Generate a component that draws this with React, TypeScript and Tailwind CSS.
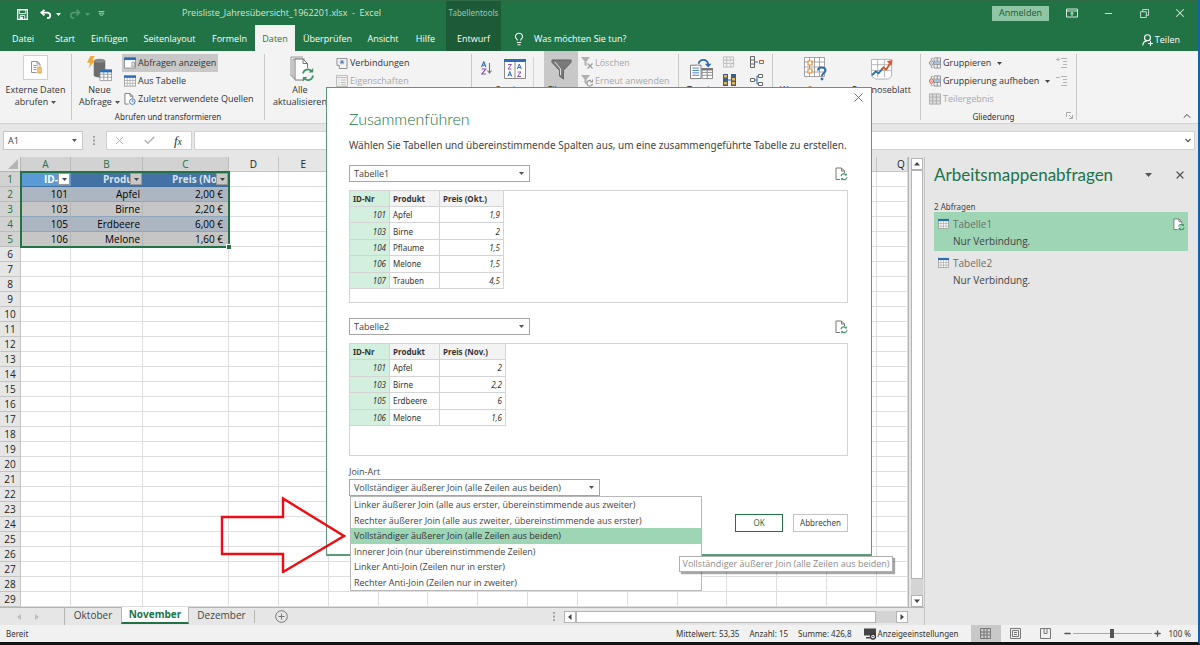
import React from 'react';
import { ChevronUp, Lightbulb, X, Check, Minus, Plus } from 'lucide-react';

const TABS = [
  { label: 'Datei', width: 'w-[46px]' },
  { label: 'Start', width: 'w-[38px]' },
  { label: 'Einfügen', width: 'w-[51px]' },
  { label: 'Seitenlayout', width: 'w-[69px]' },
  { label: 'Formeln', width: 'w-[51px]' },
  { label: 'Daten', width: 'w-[40px]', active: true },
  { label: 'Überprüfen', width: 'w-[65px]' },
  { label: 'Ansicht', width: 'w-[46px]' },
  { label: 'Hilfe', width: 'w-[39px]' },
];

const COLUMNS = 'ABCDEFGHIJKLMNOPQ'.split('');
const ROWS = Array.from({ length: 29 }, (_, i) => i + 1);

const SHEET_HEAD = ['ID-Nr', 'Produkt', 'Preis (Nov.)'];
const SHEET_DATA = [
  ['101', 'Apfel', '2,00 €'],
  ['103', 'Birne', '2,20 €'],
  ['105', 'Erdbeere', '6,00 €'],
  ['106', 'Melone', '1,60 €'],
];

const PREVIEW_1 = [
  ['101', 'Apfel', '1,9'],
  ['103', 'Birne', '2'],
  ['104', 'Pflaume', '1,5'],
  ['106', 'Melone', '1,5'],
  ['107', 'Trauben', '4,5'],
];
const PREVIEW_2 = [
  ['101', 'Apfel', '2'],
  ['103', 'Birne', '2,2'],
  ['105', 'Erdbeere', '6'],
  ['106', 'Melone', '1,6'],
];

const JOINS = [
  'Linker äußerer Join (alle aus erster, übereinstimmende aus zweiter)',
  'Rechter äußerer Join (alle aus zweiter, übereinstimmende aus erster)',
  'Vollständiger äußerer Join (alle Zeilen aus beiden)',
  'Innerer Join (nur übereinstimmende Zeilen)',
  'Linker Anti-Join (Zeilen nur in erster)',
  'Rechter Anti-Join (Zeilen nur in zweiter)',
];

type IconProps = { className?: string };

function Caret({ className = 'text-[#555]' }: IconProps) {
  return (
    <svg viewBox="0 0 5 3" className={`h-[3px] w-[5px] shrink-0 ${className}`} aria-hidden="true">
      <path d="M0 0h5L2.5 3z" fill="currentColor" />
    </svg>
  );
}

function TableIcon({ className = 'h-[13px] w-[13px]' }: IconProps) {
  return (
    <svg viewBox="0 0 13 13" className={`shrink-0 ${className}`} aria-hidden="true">
      <rect x="0.5" y="1" width="12" height="11" fill="#fff" stroke="#8a8a8a" strokeWidth="0.8" />
      <path d="M0.5 6h12M0.5 9h12M3.5 3v9M6.5 3v9M9.5 3v9" stroke="#9a9a9a" strokeWidth="0.7" />
      <rect x="0" y="0.5" width="13" height="2.6" fill="#2e6db4" />
    </svg>
  );
}

function PageRefresh({ className = 'h-[14px] w-[13px]' }: IconProps) {
  return (
    <svg viewBox="0 0 13 14" className={`shrink-0 ${className}`} fill="none" aria-hidden="true">
      <path d="M5 12.5H1V1h5.5L9.5 4v2" stroke="#777" fill="#fff" />
      <path d="M6.5 1v3h3" stroke="#777" />
      <path d="M6 9.2a2.8 2.8 0 0 1 5-1.2M12 10.2a2.8 2.8 0 0 1-5 1.4" stroke="#3f9468" strokeWidth="1.2" />
      <path d="M11.8 6.2v2.4H9.4zM6.2 13.6v-2.6h2.4z" fill="#3f9468" />
    </svg>
  );
}

function Divider() {
  return <div className="mt-[3px] h-[66px] w-px shrink-0 bg-[#c8c8c8]" />;
}

function RibbonRow({ icon, label, disabled, caret, active }: {
  icon: React.ReactNode; label: string; disabled?: boolean; caret?: boolean; active?: boolean;
}) {
  return (
    <button
      type="button"
      disabled={disabled}
      className={`flex h-[18px] items-center gap-[2px] whitespace-nowrap px-[2px] ${active ? 'bg-[#c8c8c8]' : ''} ${disabled ? 'text-[#a8a8a8]' : 'text-[#333]'}`}
    >
      {icon}
      {label}
      {caret && <Caret className="ml-1 text-[#444]" />}
    </button>
  );
}

function BigButton({ icon, lines, caret, className = '' }: {
  icon: React.ReactNode; lines: string[]; caret?: boolean; className?: string;
}) {
  return (
    <button type="button" className={`flex flex-col items-center whitespace-nowrap pt-[3px] leading-[12px] ${className}`}>
      <span className="flex h-[30px] items-center">{icon}</span>
      {lines.map((line, i) => (
        <span key={line} className="flex items-center gap-[3px]">
          {line}
          {caret && i === lines.length - 1 && <Caret />}
        </span>
      ))}
    </button>
  );
}

function GroupIcon({ accent }: { accent: string }) {
  return (
    <svg viewBox="0 0 13 13" className="h-[12px] w-[12px] shrink-0" fill="none" aria-hidden="true">
      <path d="M5.5 1h7v11h-7zM5.5 4.5h7M5.5 8h7M9 1v11" stroke="#777" strokeWidth="0.8" />
      <path d="M4 1.5H2.5v10H4" stroke="#888" strokeWidth="0.8" />
      <rect x="6" y="5" width="6" height="2.5" fill="#9cc3e6" />
      <circle cx="2.8" cy="6.5" r="2.3" fill="#fff" stroke={accent} />
      <path d="M1.5 6.5h2.6" stroke={accent} />
    </svg>
  );
}

function TitleBar() {
  return (
    <div className="flex h-[25px] items-stretch border-t border-[#2e6a45] text-[9px] text-[#cfe6d8]">
      <div className="flex w-[182px] items-center pl-[17px] pt-[2px]">
        <button type="button" aria-label="Speichern" className="mr-[12px]">
          <svg viewBox="0 0 12 12" className="h-[11px] w-[11px]" aria-hidden="true">
            <path d="M0.7 0.7h10.6v10.6H0.7z" fill="none" stroke="#fff" strokeWidth="1.4" />
            <path d="M2.5 1h7v4h-7zM3.5 7h5v4.5h-5z" fill="none" stroke="#fff" strokeWidth="1" />
            <path d="M3.5 8.5h3v3h-3z" fill="#fff" />
          </svg>
        </button>
        <button type="button" aria-label="Rückgängig" className="flex items-center gap-[4px]">
          <svg viewBox="0 0 12 10" className="h-[10px] w-[12px]" fill="none" stroke="#fff" strokeWidth="1.7" aria-hidden="true">
            <path d="M4.5 0.8L1.3 3.6l3.2 2.8M1.5 3.6h5.5a3 2.6 0 0 1 0 5.6" />
          </svg>
          <Caret className="text-white" />
        </button>
        <button type="button" aria-label="Wiederholen" disabled className="ml-[8px] flex items-center gap-[4px]">
          <svg viewBox="0 0 12 10" className="h-[10px] w-[12px]" fill="none" stroke="#559a72" strokeWidth="1.5" aria-hidden="true">
            <path d="M7.5 0.8l3.2 2.8-3.2 2.8M10.5 3.6H5a3 2.6 0 0 0 0 5.6" />
          </svg>
          <Caret className="text-[#559a72]" />
        </button>
        <button type="button" aria-label="Symbolleiste anpassen" className="ml-[8px]">
          <svg viewBox="0 0 7 6" className="h-[6px] w-[7px]" fill="none" stroke="#a8d0b8" strokeWidth="0.9" aria-hidden="true">
            <path d="M0.5 0.5h6M1 2.2h5L3.500 5z" />
          </svg>
        </button>
      </div>
      <h1 className="flex w-[264px] items-center whitespace-pre">Preisliste_Jahresübersicht_1962201.xlsx  -  Excel</h1>
      <div className="flex w-[55px] items-center justify-center bg-[#1c5a38] font-['Noto_Sans',sans-serif] text-[8px] text-[#9cc8ae]">Tabellentools</div>
      <div className="ml-auto flex items-center text-[#d5eadd]">
        <button type="button" className="h-[15px] w-[57px] bg-[#8fc6a5] text-[#1c5a38]">Anmelden</button>
        <button type="button" aria-label="Menüband-Anzeigeoptionen" className="ml-[17px]">
          <svg viewBox="0 0 12 10" className="h-[10px] w-[12px]" fill="none" stroke="currentColor" aria-hidden="true">
            <path d="M0.5 1h11v8H0.5zM0.5 3h11M6 8V4.5M4.3 6L6 4.4 7.7 6" />
          </svg>
        </button>
        <button type="button" aria-label="Minimieren" className="ml-[25px]"><Minus size={11} strokeWidth={2} /></button>
        <button type="button" aria-label="Wiederherstellen" className="ml-[26px]">
          <svg viewBox="0 0 10 10" className="h-[9px] w-[9px]" fill="none" stroke="currentColor" aria-hidden="true">
            <path d="M0.5 3h6.5v6.5H0.5zM3 3V0.5h6.5V7H7" />
          </svg>
        </button>
        <button type="button" aria-label="Schließen" className="ml-[24px] mr-[11px]"><X size={14} strokeWidth={1.8} /></button>
      </div>
    </div>
  );
}

function TabBar() {
  return (
    <nav className="flex h-[26px] items-stretch text-[9px] font-medium text-white">
      {TABS.map((t) => (
        <button key={t.label} type="button" className={`shrink-0 pt-[2px] ${t.width} ${t.active ? 'bg-[#f3f3f3] text-[#217346]' : ''}`}>
          {t.label}
        </button>
      ))}
      <button type="button" className="ml-px w-[55px] bg-[#1c5a38] pt-[2px]">Entwurf</button>
      <button type="button" className="ml-[11px] flex items-center gap-[8px] pt-[2px]">
        <Lightbulb size={14} strokeWidth={1.8} />
        Was möchten Sie tun?
      </button>
      <button type="button" className="ml-auto mr-[18px] flex items-center gap-[2px] pt-[4px]">
        <svg viewBox="0 0 11 12" className="h-[12px] w-[11px]" fill="none" stroke="#fff" strokeWidth="1.1" aria-hidden="true">
          <circle cx="5.5" cy="3.8" r="3" />
          <path d="M0.8 11.5c0-2.5 1.5-4.2 4-4.6M6 9.5h5M8.5 7v5" />
        </svg>
        Teilen
      </button>
    </nav>
  );
}

function Ribbon() {
  return (
    <section aria-label="Menüband" className="flex h-[73px] items-start border-b border-[#d2d2d2] bg-[#f3f3f3] text-[9px] text-[#333]">
      <BigButton
        className="w-[71px]"
        lines={['Externe Daten', 'abrufen']}
        caret
        icon={
          <svg viewBox="0 0 25 25" className="mb-[4px] h-[25px] w-[25px]" fill="none" aria-hidden="true">
            <path d="M0.5 0.5h24v24H0.5z" fill="#fff" stroke="#cfcfcf" />
            <path d="M8.5 6.5h6l2.5 2.5v2M8.5 6.5v11h5M14 6.5V9h3M10.500 10.500h4M10.500 12.500h3M10.500 14.500h3" stroke="#888" strokeWidth="0.9" />
            <rect x="14" y="11.500" width="5" height="7" rx="1.500" fill="#f0ab55" />
            <path d="M14 14h5M14 16h5" stroke="#fbe0bd" strokeWidth="0.700" />
          </svg>
        }
      />
      <Divider />
      <div className="flex w-[192px] flex-col">
        <div className="flex">
          <BigButton
            className="ml-[5px] w-[45px]"
            lines={['Neue', 'Abfrage']}
            caret
            icon={
              <svg viewBox="0 0 26 28" className="h-[27px] w-[25px]" aria-hidden="true">
                <path d="M7 5v15c0 3 12 3 12 0V5z" fill="#6d6d6d" />
                <ellipse cx="13" cy="5" rx="6" ry="2.200" fill="#8a8a8a" />
                <path d="M3.500 0H8L5.500 4.500h3L1.500 13l2-6H0z" fill="#f0a73c" />
                <path d="M13.500 14.500h12v11h-12zM13.500 19h12M13.500 22h12M17.500 15v10M21.500 15v10" fill="#fff" stroke="#8a8a8a" strokeWidth="0.800" />
                <path d="M13 14h13v3H13z" fill="#2e6db4" />
              </svg>
            }
          />
          <div className="flex flex-col items-start pt-[3px]">
            <RibbonRow active icon={
              <svg viewBox="0 0 13 13" className="h-[12px] w-[12px] shrink-0" aria-hidden="true">
                <path d="M0.500 1h12v11H0.500z" fill="#fff" stroke="#8a8a8a" />
                <path d="M0 0.500h13v2.800H0z" fill="#2e6db4" />
                <path d="M8.500 5.500h3v5h-3z" fill="#ddd" stroke="#888" strokeWidth="0.700" />
              </svg>
            } label="Abfragen anzeigen" />
            <RibbonRow icon={<TableIcon className="h-[12px] w-[12px]" />} label="Aus Tabelle" />
            <RibbonRow icon={
              <svg viewBox="0 0 13 13" className="h-[12px] w-[12px] shrink-0" fill="none" aria-hidden="true">
                <path d="M5 12H1V0.500h5.500l3 3V6M6.500 0.500v3h3" stroke="#777" fill="#fff" />
                <circle cx="9" cy="9.300" r="3" stroke="#2e6db4" fill="#fff" />
                <path d="M9 7.500v2h1.500" stroke="#2e6db4" strokeWidth="0.800" />
              </svg>
            } label="Zuletzt verwendete Quellen" />
          </div>
        </div>
        <div className="h-[14px] text-center font-['Noto_Sans',sans-serif] text-[8px] leading-[18px]">Abrufen und transformieren</div>
      </div>
      <Divider />
      <BigButton
        className="ml-[2px] w-[66px]"
        lines={['Alle', 'aktualisieren']}
        icon={
          <svg viewBox="0 0 24 26" className="ml-[4px] h-[26px] w-[24px]" fill="none" aria-hidden="true">
            <path d="M3 20H1V1h12M5 22H3V3h12" stroke="#999" />
            <path d="M14 24H5V3h8l4.500 4.500V12M13 3v4.500h4.500" stroke="#777" fill="#fff" />
            <path d="M13 17.500a5 5 0 0 1 9-2M23 19.500a5 5 0 0 1-9 2.500" stroke="#3f9468" strokeWidth="1.800" />
            <path d="M23.200 12v4.500h-4.500zM12.800 25.500V21h4.500z" fill="#3f9468" />
          </svg>
        }
      />
      <div className="flex w-[138px] flex-col items-start pl-px pt-[3px]">
        <RibbonRow icon={
          <svg viewBox="0 0 12 12" className="h-[11px] w-[12px] shrink-0" fill="none" aria-hidden="true">
            <path d="M0.500 8V0.500h11V8M3 11.500h8.500V7.500M0.500 8H3v3.500" stroke="#888" />
            <path d="M6 2v5M3.500 4.500h5M4.300 2.800l3.400 3.400M7.700 2.800L4.300 6.200" stroke="#2e6db4" strokeWidth="0.800" />
          </svg>
        } label="Verbindungen" />
        <RibbonRow disabled icon={
          <svg viewBox="0 0 12 12" className="h-[12px] w-[12px] shrink-0" fill="none" stroke="#b0b0b0" aria-hidden="true">
            <path d="M0.500 0.500h11v11H0.500zM0.500 2.500h11M2.500 5h1M5 5h5M2.500 7.500h1M5 7.500h5M2.500 9.800h1M5 9.800h5" strokeWidth="0.800" />
          </svg>
        } label="Eigenschaften" />
      </div>
      <Divider />
      <div className="flex w-[206px] items-start">
        <button type="button" aria-label="Von A bis Z sortieren" className="ml-[9px] mt-[10px]">
          <svg viewBox="0 0 11 14" className="h-[14px] w-[11px]" fill="none" strokeWidth="1.100" aria-hidden="true">
            <path d="M0.500 6L2.800 0.800 5 6M1.300 4.200h3" stroke="#2e6db4" />
            <path d="M0.800 8h4L0.800 13h4.200" stroke="#8a4fb0" />
            <path d="M8.500 2v10M6.500 9.500l2 2.500 2-2.500" stroke="#777" />
          </svg>
        </button>
        <BigButton
          className="ml-[5px] w-[36px]"
          lines={['Sortieren']}
          icon={
            <svg viewBox="0 0 22 20" className="h-[20px] w-[22px]" fill="none" aria-hidden="true">
              <path d="M0.500 1h21v18.500H0.500zM11 1v18" stroke="#888" fill="#fff" />
              <path d="M0 0h22v3H0z" fill="#2e6db4" />
              <path d="M4 5.500h3.500L4 10h3.500M13.500 13h3.500l-3.500 4.500H17" stroke="#8a4fb0" />
              <path d="M3.800 17.500L5.800 12.500l2 5M4.500 16h2.600M13.300 10l2-5 2 5M14 8.500h2.600" stroke="#2e6db4" />
            </svg>
          }
        />
        <div className="mt-[6px] h-[46px] w-px bg-[#d4d4d4]" />
        <BigButton
          className="ml-[10px] h-[62px] w-[34px] bg-[#c8c8c8]"
          lines={['Filtern']}
          icon={
            <svg viewBox="0 0 22 22" className="h-[21px] w-[21px]" aria-hidden="true">
              <path d="M1 1h20v2.500L13 12v9l-4-3v-6L1 3.500z" fill="#7a7a7a" stroke="#5f5f5f" />
              <path d="M4 3l6 7.500V17" fill="none" stroke="#e6e6e6" />
            </svg>
          }
        />
        <div className="flex flex-col items-start pl-px pt-[3px]">
          <RibbonRow disabled icon={
            <svg viewBox="0 0 12 12" className="h-[12px] w-[12px] shrink-0" aria-hidden="true">
              <path d="M0 0h9L5.500 4.500v5L3.500 8V4.500z" fill="#b0b0b0" />
              <path d="M6.500 6.500l5 5M11.500 6.500l-5 5" stroke="#999" strokeWidth="1.200" />
            </svg>
          } label="Löschen" />
          <RibbonRow disabled icon={
            <svg viewBox="0 0 12 12" className="h-[12px] w-[12px] shrink-0" fill="none" aria-hidden="true">
              <path d="M0 0h9L5.500 4.500v5L3.500 8V4.500z" fill="#b0b0b0" />
              <path d="M11 6.500A2.800 2.800 0 1 0 11.500 9M11.500 4.500v2.500H9" stroke="#999" strokeWidth="1.200" />
            </svg>
          } label="Erneut anwenden" />
        </div>
      </div>
      <Divider />
      <div className="flex w-[93px] items-start">
        <BigButton
          className="ml-[2px] w-[40px]"
          lines={['Text in']}
          icon={
            <svg viewBox="0 0 24 24" className="h-[23px] w-[23px]" fill="none" aria-hidden="true">
              <path d="M0.500 7.500h11v14H0.500z" fill="#fff" stroke="#777" />
              <path d="M2.500 10.500h7M2.500 13h7M2.500 15.500h7M2.500 18h7" stroke="#2e6db4" strokeWidth="0.900" />
              <path d="M12.500 11.500h11v10h-11zM12.500 15h11M12.500 18h11M18 11.500v10" stroke="#888" fill="#fff" />
              <path d="M12 10.500h12V13H12z" fill="#777" />
              <path d="M9 6c1-5 9-6 10 1" stroke="#2e6db4" strokeWidth="1.800" />
              <path d="M15.500 6h7L19 10z" fill="#2e6db4" />
            </svg>
          }
        />
        <div className="grid grid-cols-[27px_14px] gap-y-[6px] pl-[2px] pt-[5px]">
          <button type="button" aria-label="Blitzvorschau" disabled>
            <svg viewBox="0 0 13 12" className="h-[12px] w-[12px]" fill="none" stroke="#bbb" aria-hidden="true">
              <path d="M0.500 0.500h11v11H0.500zM0.500 4h11M0.500 7.500h11M4 0.500v11M8 0.500v5M8 11.500l1-4h3" />
            </svg>
          </button>
          <button type="button" aria-label="Konsolidieren">
            <svg viewBox="0 0 14 12" className="h-[12px] w-[14px]" fill="none" aria-hidden="true">
              <path d="M0.500 0.500h4v11h-4zM0.500 4h4M0.500 8h4" stroke="#666" />
              <path d="M5 6h3" stroke="#2e6db4" />
              <path d="M9.500 4.500h4v3h-4z" stroke="#d65532" />
            </svg>
          </button>
          <button type="button" aria-label="Duplikate entfernen">
            <svg viewBox="0 0 13 12" className="h-[12px] w-[13px]" aria-hidden="true">
              <path d="M0 0h5v12H0zM8 0h5v12H8z" fill="#3b5f8c" />
              <path d="M1 1h3v2.500H1zM1 8h3v2.500H1zM9 4h3v2.500H9zM9 8h3v2.500H9z" fill="#f0b24c" />
              <path d="M5 6h3" stroke="#2e6db4" />
            </svg>
          </button>
          <button type="button" aria-label="Beziehungen">
            <svg viewBox="0 0 13 12" className="h-[12px] w-[13px]" fill="none" aria-hidden="true">
              <path d="M0.500 4.500h4v3h-4zM8.500 0.500h4v3h-4zM8.500 8.500h4v3h-4z" stroke="#666" fill="#fff" />
              <path d="M4.500 6h2.500M8.500 2H7v8h1.500" stroke="#2e6db4" />
            </svg>
          </button>
        </div>
      </div>
      <Divider />
      <div className="flex w-[147px] items-start">
        <BigButton
          className="ml-[7px] w-[70px]"
          lines={['Was-wäre-wenn-']}
          icon={
            <svg viewBox="0 0 23 24" className="h-[24px] w-[23px]" fill="none" aria-hidden="true">
              <path d="M0.500 0.500h20v19h-20zM0.500 5h20M0.500 10h20M0.500 15h20M5.500 0.500v19M10.500 0.500v19M15.500 0.500v19" stroke="#999" strokeWidth="0.900" fill="#fff" />
              <path d="M4 4h4v4H4zM4 12h4v4H4z" stroke="#e08a3c" fill="#fff" strokeWidth="1.200" />
              <path d="M14 13.500c0-4 7.500-4 7.500 0 0 2.500-3.500 2.500-3.500 5.500" stroke="#2e6db4" strokeWidth="2" />
              <circle cx="18" cy="22" r="1.400" fill="#2e6db4" />
            </svg>
          }
        />
        <BigButton
          className="w-[63px]"
          lines={['Prognoseblatt']}
          icon={
            <svg viewBox="0 0 23 23" className="h-[22px] w-[22px]" fill="none" aria-hidden="true">
              <path d="M0.500 1.500h21v17.500L18 22H5l-4.500-3zM0.500 7h21M0.500 13h21M7 1.500V20M14 1.500V20" stroke="#aaa" strokeWidth="0.900" fill="#fff" />
              <path d="M1 18l4-4 3 2 4-5" stroke="#2e6db4" strokeWidth="2" />
              <path d="M11 12l2-2 3 2 5-8" stroke="#d65532" strokeWidth="2" />
              <path d="M16.500 3.500L22.500 2l-1 6z" fill="#d65532" />
            </svg>
          }
        />
      </div>
      <Divider />
      <div className="w-[155px]">
        <div className="flex items-start justify-between">
          <div className="flex flex-col items-start pl-[6px] pt-[3px]">
            <RibbonRow caret icon={<GroupIcon accent="#888" />} label="Gruppieren" />
            <RibbonRow caret icon={<GroupIcon accent="#d65532" />} label="Gruppierung aufheben" />
            <RibbonRow disabled icon={
              <svg viewBox="0 0 13 12" className="h-[12px] w-[12px] shrink-0" fill="#ddd" stroke="#aaa" aria-hidden="true">
                <path d="M0.500 0.500h12v11H0.500zM0.500 4h12M0.500 8h12M4 0.500v11M8 0.500v11" />
              </svg>
            } label="Teilergebnis" />
          </div>
          <div className="flex flex-col gap-[7px] pr-[9px] pt-[6px] text-[#b4b4b4]">
            <button type="button" aria-label="Detail anzeigen">
              <svg viewBox="0 0 11 11" className="h-[11px] w-[11px]" fill="none" stroke="currentColor" aria-hidden="true">
                <path d="M0 2.500h4M2 0.500v4M5 1.500h6M7 4.500h4M7 7.500h4M5 10.500h6" />
              </svg>
            </button>
            <button type="button" aria-label="Detail ausblenden">
              <svg viewBox="0 0 11 11" className="h-[11px] w-[11px]" fill="none" stroke="currentColor" aria-hidden="true">
                <path d="M0 2.500h4M5 1.500h6M7 4.500h4M7 7.500h4M5 10.500h6" />
              </svg>
            </button>
          </div>
        </div>
        <div className="flex h-[14px] items-center font-['Noto_Sans',sans-serif] text-[8px]">
          <span className="flex-1 pt-[4px] text-center">Gliederung</span>
          <button type="button" aria-label="Gliederungseinstellungen" className="mr-[3px]">
            <svg viewBox="0 0 7 7" className="h-[7px] w-[7px]" fill="none" stroke="#aaa" aria-hidden="true">
              <path d="M0.500 5V0.500H5M3 3l3 3M6.500 3v3.500H3" />
            </svg>
          </button>
        </div>
      </div>
      <Divider />
      <button type="button" aria-label="Menüband reduzieren" className="ml-auto mr-[5px] self-end pb-[1px]"><ChevronUp size={12} color="#444" /></button>
    </section>
  );
}

function FormulaBar() {
  return (
    <div className="flex h-[33px] items-center gap-[2px] bg-[#e6e6e6] px-[3px] text-[9px] text-[#444]">
      <label className="flex h-[19px] w-[80px] items-center border border-[#c6c6c6] bg-white pl-[4px] pr-[5px]">
        <input aria-label="Namenfeld" defaultValue="A1" className="w-full min-w-0 bg-transparent outline-none" />
        <Caret />
      </label>
      <svg viewBox="0 0 2 10" className="mx-[8px] h-[9px] w-[2px]" fill="#999" aria-hidden="true">
        <path d="M0 0h2v2H0zM0 4h2v2H0zM0 8h2v2H0z" />
      </svg>
      <div className="ml-[1px] flex h-[19px] w-[86px] items-center justify-between border border-[#d0d0d0] bg-white pl-[6px] pr-[9px] text-[#b0b0b0]">
        <button type="button" aria-label="Abbrechen"><X size={13} strokeWidth={1.8} /></button>
        <button type="button" aria-label="Eingeben"><Check size={13} strokeWidth={2.4} /></button>
        <button type="button" aria-label="Funktion einfügen" className="font-['Liberation_Serif',serif] text-[13px] italic text-[#333]">
          f<span className="text-[10px]">x</span>
        </button>
      </div>
      <div className="flex h-[19px] flex-1 items-center border border-[#d0d0d0] bg-white pr-[3px]">
        <input aria-label="Bearbeitungsleiste" className="w-full min-w-0 bg-transparent px-1 outline-none" />
        <svg viewBox="0 0 7 5" className="h-[5px] w-[6px]" fill="none" stroke="#555" strokeWidth="1.600" aria-hidden="true"><path d="M0.500 0.800l3 3 3-3" /></svg>
      </div>
    </div>
  );
}

function Sheet() {
  return (
    <div className="relative min-w-0 flex-1 bg-white">
      <table className="w-full table-fixed border-separate border-spacing-0 text-[10px] leading-[14px] text-[#222]">
        <colgroup>
          <col className="w-[21px]" />
          <col className="w-[50px]" />
          <col className="w-[72px]" />
          <col className="w-[86px]" />
          {COLUMNS.slice(3, 16).map((c) => <col key={c} />)}
          <col className="w-[31px]" />
        </colgroup>
        <thead>
          <tr className="h-[15px]">
            <th className="border-b border-r border-[#b4b4b4] bg-[#e6e6e6] p-0">
              <svg viewBox="0 0 10 10" className="ml-auto mr-[2px] h-[10px] w-[10px]" fill="#b4b4b4" aria-hidden="true"><path d="M10 0v10H0z" /></svg>
            </th>
            {COLUMNS.map((c, i) => (
              <th
                key={c}
                className={`h-[15px] overflow-hidden border-b border-r p-0 font-normal ${i < 3 ? 'border-[#bcbcbc] bg-[#d2d2d2] text-[#217346]' : 'border-[#c4c4c4] bg-[#e6e6e6]'} ${c === 'Q' ? 'pl-[18px]' : ''}`}
              >
                {c}
              </th>
            ))}
          </tr>
        </thead>
        <tbody>
          {ROWS.map((r) => (
            <tr key={r} className="h-[15px]">
              <th className={`h-[15px] border-b border-r p-0 font-normal ${r <= 5 ? 'border-[#bcbcbc] bg-[#d2d2d2] text-[#217346]' : 'border-[#c4c4c4] bg-[#e6e6e6]'}`}>{r}</th>
              {COLUMNS.map((c, i) => {
                if (i < 3 && r === 1) {
                  return (
                    <td key={c} className={`border-b border-[#3f6fa0] p-0 font-bold ${i === 0 ? 'bg-[#5b9bd5] text-white' : 'bg-[#4472a4] text-[#d9e2ec]'}`}>
                      <div className="flex h-[14px] items-center justify-end">
                        <span className={`overflow-hidden whitespace-nowrap ${i === 0 ? 'w-[14px]' : i === 1 ? 'w-[27px]' : 'w-[44px]'}`}>{SHEET_HEAD[i]}</span>
                        <button type="button" aria-label={`${SHEET_HEAD[i]} filtern`} className={`mr-px flex h-[12px] w-[12px] shrink-0 items-center justify-center border border-[#9a9a9a] ${i === 0 ? 'bg-white' : 'bg-[#c8c8c8]'}`}>
                          <Caret className="text-[#444]" />
                        </button>
                      </div>
                    </td>
                  );
                }
                if (i < 3 && r <= 5) {
                  return (
                    <td key={c} className={`border-b border-r border-b-[#8fa6bf] border-r-[#b5b5b5] p-0 text-right font-medium text-black ${i === 2 ? 'pr-[5px]' : 'pr-[2px]'} ${r % 2 === 0 ? 'bg-[#acb6c2]' : 'bg-[#c6c6c6]'}`}>
                      {SHEET_DATA[r - 2][i]}
                    </td>
                  );
                }
                return <td key={c} className="border-b border-r border-[#dedede] p-0" />;
              })}
            </tr>
          ))}
        </tbody>
      </table>
      <div className="pointer-events-none absolute left-[20px] top-[14px] h-[77px] w-[210px] border-2 border-[#217346]">
        <span className="absolute -bottom-[3px] -right-[3px] h-[5px] w-[5px] border-l border-t border-white bg-[#217346]" />
      </div>
    </div>
  );
}

function ScrollButton({ path, label }: { path: string; label: string }) {
  return (
    <button type="button" aria-label={label} className="flex h-[12px] w-[12px] shrink-0 items-center justify-center border border-[#b4b4b4] bg-white">
      <svg viewBox="0 0 6 6" className="h-[6px] w-[6px]" fill="#444" aria-hidden="true"><path d={path} /></svg>
    </button>
  );
}

function SheetTabs() {
  return (
    <div className="flex h-[18px] items-stretch border-t border-[#b4b4b4] bg-[#e6e6e6] text-[10px] text-[#444]">
      <div className="flex w-[65px] items-center gap-[14px] border-r border-[#b4b4b4] pl-[17px]">
        <svg viewBox="0 0 4 6" className="h-[6px] w-[4px]" fill="#bbb" aria-hidden="true"><path d="M4 0v6L0 3z" /></svg>
        <svg viewBox="0 0 4 6" className="h-[6px] w-[4px]" fill="#bbb" aria-hidden="true"><path d="M0 0v6l4-3z" /></svg>
      </div>
      <button type="button" className="w-[56px] pb-[3px]">Oktober</button>
      <button type="button" className="-mt-px mb-px w-[68px] border-x border-b-2 border-x-[#b4b4b4] border-b-[#217346] bg-white pb-[2px] font-bold text-[#217346]">November</button>
      <button type="button" className="w-[65px] pb-[3px]">Dezember</button>
      <div className="my-[2px] w-px bg-[#b4b4b4]" />
      <button type="button" aria-label="Neues Blatt" className="ml-[20px]">
        <svg viewBox="0 0 13 13" className="h-[13px] w-[13px]" fill="none" stroke="#777" aria-hidden="true">
          <circle cx="6.500" cy="6.500" r="5.800" /><path d="M6.500 3.500v6M3.500 6.500h6" />
        </svg>
      </button>
      <div className="ml-auto flex w-[371px] items-center gap-[9px] pr-[16px]">
        <svg viewBox="0 0 2 10" className="h-[9px] w-[2px]" fill="#999" aria-hidden="true"><path d="M0 0h2v2H0zM0 4h2v2H0zM0 8h2v2H0z" /></svg>
        <div className="flex flex-1 bg-[#d4d4d4]">
          <ScrollButton label="Nach links" path="M4.500 0v6L1 3z" />
          <div className="mr-[20px] h-[12px] flex-1 border border-[#b4b4b4] bg-white" />
          <ScrollButton label="Nach rechts" path="M1.500 0v6L5 3z" />
        </div>
      </div>
    </div>
  );
}

function QueryItem({ name, active }: { name: string; active?: boolean }) {
  return (
    <li className={`flex h-[39px] items-start pl-[4px] pr-[3px] pt-[6px] ${active ? 'bg-[#9dd5b5]' : ''}`}>
      <TableIcon className="h-[12px] w-[11px]" />
      <div className="-mt-[2px] ml-[4px] flex-1 text-[10px] leading-[17px]">
        <div className="text-[#6a6f6c]">{name}</div>
        <div className="text-[#444]">Nur Verbindung.</div>
      </div>
      {active && <PageRefresh className="h-[13px] w-[12px]" />}
    </li>
  );
}

function QueriesPane() {
  return (
    <aside className="w-[274px] shrink-0 border-l border-[#c4c4c4] bg-[#e6e6e6] pl-[9px] pr-[10px]">
      <div className="flex h-[36px] items-center">
        <h2 className="flex-1 whitespace-nowrap font-['Lato',sans-serif] text-[17px] leading-[36px] text-[#217346]">Arbeitsmappenabfragen</h2>
        <svg viewBox="0 0 7 4" className="mr-[22px] h-[4px] w-[7px]" fill="#555" aria-hidden="true"><path d="M0 0h7L3.500 4z" /></svg>
        <button type="button" aria-label="Aufgabenbereich schließen" className="mr-[2px]"><X size={12} strokeWidth={2.4} color="#555" /></button>
      </div>
      <p className="mt-[8px] font-['Noto_Sans',sans-serif] text-[8px] leading-[11px] text-[#444]">2 Abfragen</p>
      <ul>
        <QueryItem name="Tabelle1" active />
        <QueryItem name="Tabelle2" />
      </ul>
    </aside>
  );
}

function StatusBar() {
  return (
    <footer className="flex h-[17px] items-center bg-[#f1f1f1] font-['Noto_Sans',sans-serif] text-[8px] text-[#333]">
      <span className="pl-[6px]">Bereit</span>
      <div className="ml-auto flex h-full items-center whitespace-nowrap">
        <span className="mr-[10px]">Mittelwert: 53,35</span>
        <span className="mr-[10px]">Anzahl: 15</span>
        <span className="mr-[12px]">Summe: 426,8</span>
        <button type="button" className="mr-[12px] flex items-center gap-px">
          <svg viewBox="0 0 13 12" className="h-[12px] w-[13px]" aria-hidden="true">
            <path d="M0 0.500h12v7H0zM2 9h4v1.500H2z" fill="#444" />
            <circle cx="9" cy="8.500" r="2.500" fill="#f1f1f1" stroke="#333" strokeWidth="1.300" />
            <circle cx="9" cy="8.500" r="0.800" fill="#333" />
          </svg>
          Anzeigeeinstellungen
        </button>
        <button type="button" aria-label="Normal" className="flex h-full w-[30px] items-center justify-center bg-[#c8c8c8]">
          <svg viewBox="0 0 11 11" className="h-[11px] w-[11px]" fill="none" stroke="#777" aria-hidden="true"><path d="M0.500 0.500h10v10h-10zM0.500 4h10M0.500 7h10M4 0.500v10M7 0.500v10" /></svg>
        </button>
        <button type="button" aria-label="Seitenlayout" className="flex h-full w-[30px] items-center justify-center">
          <svg viewBox="0 0 11 11" className="h-[11px] w-[11px]" fill="none" stroke="#777" aria-hidden="true"><path d="M0.500 0.500h10v10h-10zM2.500 2.500h6v6h-6zM4 4.500h3M4 6.500h3" /></svg>
        </button>
        <button type="button" aria-label="Umbruchvorschau" className="flex h-full w-[30px] items-center justify-center">
          <svg viewBox="0 0 11 11" className="h-[11px] w-[11px]" fill="none" stroke="#777" aria-hidden="true"><path d="M0.500 0.500h10v10h-10zM4 0.500v5M7 0.500v5M4 5.500h3" /></svg>
        </button>
        <button type="button" aria-label="Verkleinern" className="ml-[2px]"><Minus size={9} strokeWidth={3.500} color="#555" /></button>
        <input
          type="range"
          aria-label="Zoom"
          defaultValue={50}
          className="mx-[1px] h-[9px] w-[79px] appearance-none bg-transparent [&::-webkit-slider-runnable-track]:h-px [&::-webkit-slider-runnable-track]:bg-[#aaa] [&::-webkit-slider-thumb]:-mt-[4px] [&::-webkit-slider-thumb]:h-[9px] [&::-webkit-slider-thumb]:w-[4px] [&::-webkit-slider-thumb]:appearance-none [&::-webkit-slider-thumb]:bg-[#555]"
        />
        <button type="button" aria-label="Vergrößern"><Plus size={9} strokeWidth={3.500} color="#555" /></button>
        <span className="ml-[7px] mr-[7px]">100 %</span>
      </div>
    </footer>
  );
}

function PreviewTable({ price, rows, className, priceWidth }: {
  price: string; rows: string[][]; className: string; priceWidth: string;
}) {
  return (
    <div className="h-[113px] border border-[#d4d4d4]">
      <table className={`table-fixed border-separate border-spacing-0 font-['Noto_Sans',sans-serif] text-[8px] leading-[15px] text-[#333] ${className}`}>
        <thead>
          <tr className="text-left">
            <th className="w-[40px] border-b border-r border-[#d4d4d4] bg-[#d3f0df] p-0 pl-[3px]">ID-Nr</th>
            <th className="w-[50px] border-b border-r border-[#d4d4d4] bg-[#f3f3f3] p-0 pl-[3px]">Produkt</th>
            <th className={`border-b border-r border-[#d4d4d4] bg-[#f3f3f3] p-0 pl-[3px] ${priceWidth}`}>{price}</th>
          </tr>
        </thead>
        <tbody>
          {rows.map((row) => (
            <tr key={row[0]}>
              <td className="border-b border-r border-[#d4d4d4] bg-[#d3f0df] p-0 pr-[3px] text-right italic">{row[0]}</td>
              <td className="border-b border-r border-[#d4d4d4] p-0 pl-[3px]">{row[1]}</td>
              <td className="border-b border-r border-[#d4d4d4] p-0 pr-[3px] text-right italic">{row[2]}</td>
            </tr>
          ))}
        </tbody>
      </table>
    </div>
  );
}

function Select({ label, value, options, id, width }: {
  label: string; value: string; options: string[]; id: string; width: string;
}) {
  return (
    <div className={`relative ${width}`}>
      <select id={id} aria-label={label} defaultValue={value} className="block h-[17px] w-full appearance-none border border-[#a6a6a6] bg-white pl-[4px] text-[9px] text-[#444] outline-none">
        {options.map((o) => <option key={o}>{o}</option>)}
      </select>
      <Caret className="pointer-events-none absolute right-[6px] top-[7px] text-[#555]" />
    </div>
  );
}

function MergeDialog() {
  return (
    <div className="pointer-events-none absolute inset-x-0 top-[87px] flex justify-center">
      <div role="dialog" aria-label="Zusammenführen" className="pointer-events-auto relative flex h-[469px] w-[546px] flex-col border border-b-2 border-[#5a9c79] bg-white pl-[22px] pr-[23px] text-[#444]">
        <button type="button" aria-label="Schließen" className="absolute right-[5px] top-[2px]"><X size={15} strokeWidth={1.500} color="#666" /></button>
        <h2 className="mt-[19px] font-['Lato',sans-serif] text-[16px] font-light leading-[24px] text-[#217346]">Zusammenführen</h2>
        <p className="mt-[6px] whitespace-nowrap font-['Noto_Sans',sans-serif] text-[10px] leading-[16px]">
          Wählen Sie Tabellen und übereinstimmende Spalten aus, um eine zusammengeführte Tabelle zu erstellen.
        </p>
        <div className="mb-[8px] mt-[12px] flex items-center justify-between">
          <Select id="table-1" label="Erste Tabelle" value="Tabelle1" options={['Tabelle1', 'Tabelle2']} width="w-[181px]" />
          <button type="button" aria-label="Erste Tabelle aktualisieren" className="h-[15px]"><PageRefresh /></button>
        </div>
        <PreviewTable price="Preis (Okt.)" rows={PREVIEW_1} className="h-[98px] w-[154px]" priceWidth="w-[64px]" />
        <div className="mb-[8px] mt-[15px] flex items-center justify-between">
          <Select id="table-2" label="Zweite Tabelle" value="Tabelle2" options={['Tabelle1', 'Tabelle2']} width="w-[181px]" />
          <button type="button" aria-label="Zweite Tabelle aktualisieren" className="h-[15px]"><PageRefresh /></button>
        </div>
        <PreviewTable price="Preis (Nov.)" rows={PREVIEW_2} className="h-[82px] w-[156px]" priceWidth="w-[66px]" />
        <label htmlFor="join" className="mt-[9px] text-[9px] leading-[14px]">Join-Art</label>
        <div className="relative self-start">
          <Select id="join" label="Join-Art" value={JOINS[2]} options={JOINS} width="w-[251px]" />
          <ul role="listbox" aria-label="Join-Art" className="absolute left-px top-[17px] z-10 grid h-[95px] w-[352px] grid-rows-6 border border-[#b8b8b8] bg-white text-[9px]">
            {JOINS.map((j, i) => (
              <li key={j} role="option" aria-selected={i === 2} className={`flex items-center whitespace-nowrap pl-[3px] ${i === 2 ? 'bg-[#9dd5b5] text-[#333]' : ''}`}>{j}</li>
            ))}
          </ul>
        </div>
        <div className="mb-[22px] mt-auto flex justify-end gap-[10px] font-['Noto_Sans',sans-serif] text-[8px]">
          <button type="button" className="h-[18px] w-[48px] border border-[#217346] text-[#217346]">OK</button>
          <button type="button" className="h-[18px] w-[55px] border border-[#c4c4c4]">Abbrechen</button>
        </div>
        <div role="tooltip" className="absolute left-[352px] top-[468px] z-20 flex h-[16px] w-[214px] items-center justify-center whitespace-nowrap border border-[#b0b0b0] bg-white text-[9px] text-[#8c8c8c] shadow-[2px_2px_1px_rgba(0,0,0,0.35)]">
          {JOINS[2]}
        </div>
        <svg viewBox="0 0 126 78" className="absolute -left-[107px] top-[407px] z-20 h-[78px] w-[126px]" fill="none" aria-hidden="true">
          <path d="M2 22h61V3.500L124 41 63 77V59H2z" stroke="#ee0d14" strokeWidth="2.400" />
        </svg>
      </div>
    </div>
  );
}

export default function App() {
  return (
    <div className="relative flex min-h-screen flex-col overflow-hidden border-b-[3px] border-r-2 border-b-[#141414] border-r-[#0f62b8] bg-[#e6e6e6] font-['Open_Sans','Noto_Sans',sans-serif]">
      <header className="bg-[#217346]">
        <TitleBar />
        <TabBar />
      </header>
      <Ribbon />
      <FormulaBar />
      <main className="flex flex-1">
        <div className="flex min-w-0 flex-1 flex-col">
          <div className="flex flex-1">
            <Sheet />
            <div className="flex w-[16px] shrink-0 justify-center border-l border-[#b4b4b4]">
              <div className="mt-px flex flex-col bg-[#d4d4d4]">
                <ScrollButton label="Nach oben" path="M0 4.500h6L3 1z" />
                <div className="mb-[16px] w-[12px] flex-1 border border-[#b4b4b4] bg-white" />
                <ScrollButton label="Nach unten" path="M0 1.500h6L3 5z" />
              </div>
            </div>
          </div>
          <SheetTabs />
        </div>
        <QueriesPane />
      </main>
      <StatusBar />
      <MergeDialog />
    </div>
  );
}
